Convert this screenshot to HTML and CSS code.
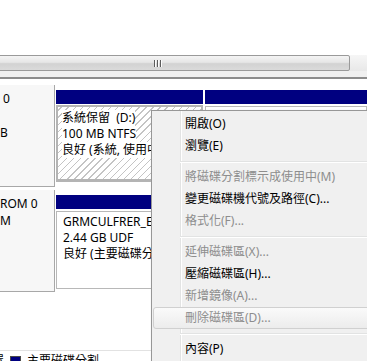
FILE: index.html
```html
<!DOCTYPE html>
<html lang="zh-Hant">
<head>
  <meta charset="UTF-8" />
  <title>磁碟管理</title>
  <link rel="stylesheet" href="styles.css">
</head>
<body>
  <div class="blank"></div>

  <div class="hscroll">
    <div class="thumb"><span class="grip"></span></div>
  </div>
  <div class="strip"></div>

  <div class="disks">
    <div class="disk">
      <div class="disk-label">
        <span class="line lead">0</span>
        <span class="line">&nbsp;</span>
        <span class="line">B</span>
      </div>
      <div class="parts">
        <div class="part">
          <div class="bar"></div>
          <div class="box hatch">
            <span class="txt">系統保留&nbsp; (D:)</span>
            <span class="txt">100 MB NTFS</span>
            <span class="txt">良好 (系統, 使用中, 作用中, 主要磁碟分割)</span>
          </div>
        </div>
        <div class="part wide">
          <div class="bar"></div>
          <div class="box"></div>
        </div>
      </div>
    </div>

    <div class="disk">
      <div class="disk-label">
        <span class="line">ROM 0</span>
        <span class="line">M</span>
      </div>
      <div class="parts">
        <div class="part wide">
          <div class="bar"></div>
          <div class="box plain">
            <span class="txt">GRMCULFRER_EN_DVD (E:)</span>
            <span class="txt">2.44 GB UDF</span>
            <span class="txt">良好 (主要磁碟分割)</span>
          </div>
        </div>
      </div>
    </div>
  </div>

  <div class="legend">
    <span class="cut">置</span>
    <span class="swatch"></span>
    <span>主要磁碟分割</span>
  </div>

  <div class="menu">
    <div class="item">開啟(O)</div>
    <div class="item">瀏覽(E)</div>
    <div class="sep"></div>
    <div class="item off">將磁碟分割標示成使用中(M)</div>
    <div class="item">變更磁碟機代號及路徑(C)...</div>
    <div class="item off">格式化(F)...</div>
    <div class="sep"></div>
    <div class="item off">延伸磁碟區(X)...</div>
    <div class="item">壓縮磁碟區(H)...</div>
    <div class="item off">新增鏡像(A)...</div>
    <div class="item off hover">刪除磁碟區(D)...</div>
    <div class="sep"></div>
    <div class="item">內容(P)</div>
  </div>
</body>
</html>
```

FILE: styles.css
```css
* { margin: 0; padding: 0; box-sizing: border-box; }
body {
  width: 367px;
  height: 361px;
  overflow: hidden;
  position: relative;
  background: #fff;
  color: #000;
  font-family: "Noto Sans", "Noto Sans CJK TC", sans-serif;
  font-size: 12px;
}
.blank { height: 55px; }

/* horizontal scrollbar */
.hscroll {
  height: 16px;
  background: linear-gradient(#f6f6f6, #e8e8e8);
  overflow: hidden;
}
.thumb {
  margin-left: -34px;
  width: 384px;
  height: 16px;
  border: 1px solid #9a9a9a;
  border-radius: 2px;
  background: linear-gradient(#f4f4f4 0%, #e6e6e6 45%, #d2d2d2 55%, #dadada 100%);
  display: flex;
  justify-content: center;
  align-items: center;
}
.grip {
  width: 8px;
  height: 7px;
  background: repeating-linear-gradient(90deg, #5c5c5c 0 1px, #fcfcfc 1px 2px, transparent 2px 3px);
}
.strip {
  height: 8px;
  background: #f0f0f0;
  border-bottom: 2px solid #8c8c8c;
}

/* disks */
.disks { padding-top: 6px; }
.disk { display: flex; height: 102px; }
.disk + .disk { margin-top: 3px; }
.disk-label {
  width: 55px;
  flex-shrink: 0;
  background: #f7f7f7;
  border-right: 1px solid #a8a8a8;
  border-bottom: 1px solid #a8a8a8;
  padding-top: 5px;
  line-height: 17px;
  white-space: nowrap;
  overflow: hidden;
}
.disk-label .line { display: block; }
.disk-label .lead { padding-left: 3px; }
.parts {
  flex: 1;
  display: flex;
  gap: 2px;
  padding: 5px 0 0 1px;
  overflow: hidden;
}
.part { width: 147px; flex-shrink: 0; display: flex; flex-direction: column; }
.part.wide { flex: 1; }
.bar { height: 14px; background: #000080; }
.box {
  margin-top: 2px;
  height: 78px;
  border: 1px solid #b8b8b8;
  padding: 2px 0 0 6px;
  line-height: 16px;
  white-space: nowrap;
  overflow: hidden;
}
.box.hatch {
  margin-top: 1px;
  height: 77px;
  border: 2px solid #b4b4b4;
  border-bottom-width: 3px;
  padding: 3px 0 0 4px;
  background: repeating-linear-gradient(-45deg, #fff 0 4px, #c4c4c4 4px 5px);
}
.box .txt { display: block; width: max-content; background: #fff; }

/* legend */
.legend {
  margin-top: 58px;
  border-top: 1px solid #e2e2e2;
  padding-top: 2px;
  display: flex;
  align-items: center;
  line-height: 16px;
  white-space: nowrap;
}
.legend .cut { margin-left: -8px; }
.swatch {
  width: 11px;
  height: 10px;
  margin: 0 6px 0 6px;
  background: #000080;
  border: 1px solid #4a4a4a;
}

/* context menu */
.menu {
  position: absolute;
  left: 151px;
  top: 110px;
  width: 250px;
  border: 1px solid #979797;
  padding: 2px 2px 2px 1px;
  background: linear-gradient(90deg, #f0f0f0 0 28px, #e2e3e3 28px 29px, #fff 29px 30px, #f0f0f0 30px);
  box-shadow: 2px 2px 3px rgba(0, 0, 0, 0.3);
}
.item {
  height: 22px;
  line-height: 22px;
  padding-left: 32px;
  white-space: nowrap;
}
.item.off { color: #8d8d8d; }
.item.hover {
  border: 1px solid #d0d0d0;
  border-radius: 3px;
  line-height: 20px;
  padding-left: 31px;
  background: linear-gradient(#fafafa, #ececec);
}
.sep {
  height: 9px;
  margin-left: 27px;
  background: linear-gradient(transparent 4px, #e2e3e3 4px 5px, #fff 5px 6px, transparent 6px);
}
```
